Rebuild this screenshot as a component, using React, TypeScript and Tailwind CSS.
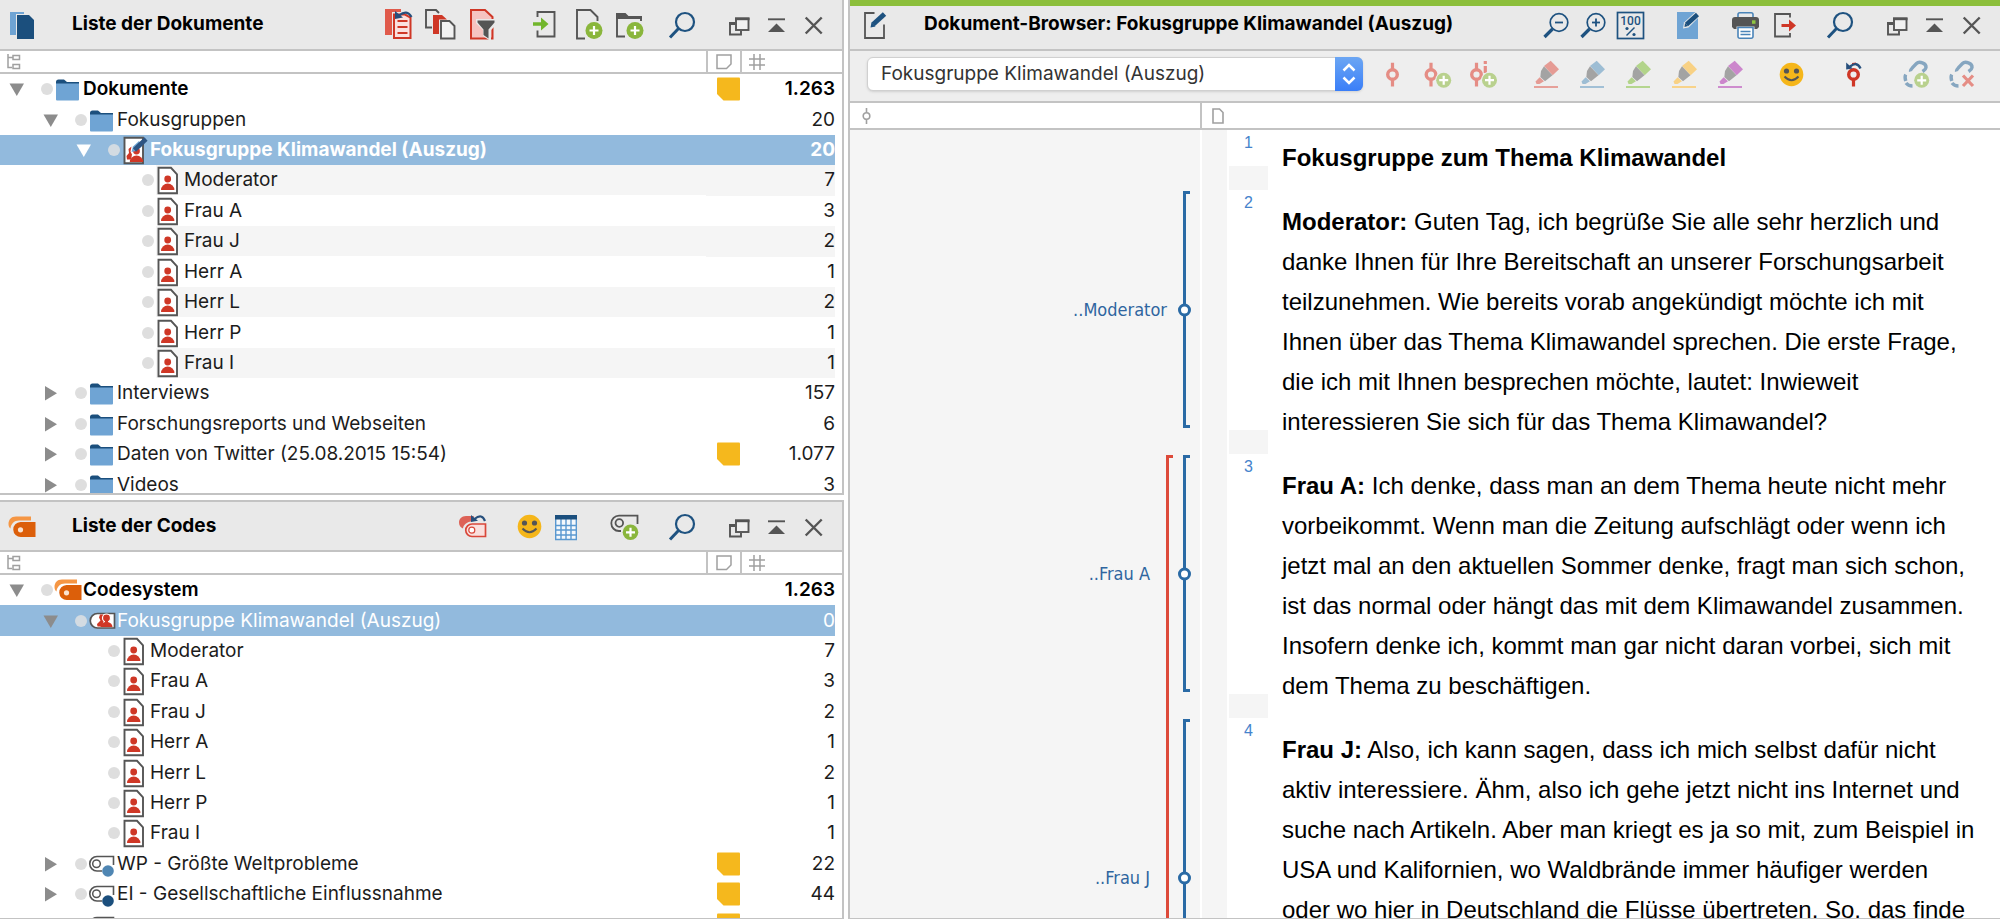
import type { ReactNode } from "react";

const GREY = "#555555";
const NAVY = "#1e5280";
const SKY = "#6fa4d4";
const RED = "#cf3726";
const GREEN = "#8ab63c";

type IconProps = { children: ReactNode };

function Glyph({ children }: IconProps) {
  return (
    <svg viewBox="0 0 32 32" width="32" height="32" fill="none" className="block shrink-0 overflow-visible" aria-hidden="true">
      {children}
    </svg>
  );
}

function IconButton({ label, children }: { label: string; children: ReactNode }) {
  return (
    <button type="button" aria-label={label} title={label} className="size-8 shrink-0">
      <Glyph>{children}</Glyph>
    </button>
  );
}

function Plus({ x, y, r = 8.5, fill = GREEN }: { x: number; y: number; r?: number; fill?: string }) {
  return (
    <>
      <circle cx={x} cy={y} r={r} fill={fill} />
      <path d={`M${x - 4.5} ${y}h9M${x} ${y - 4.5}v9`} stroke="#fff" strokeWidth="2.2" />
    </>
  );
}

/* ---------- toolbar drawings ---------- */

const docsLogo = (
  <>
    <path d="M4 4H18V6H10V27H4z" fill={SKY} />
    <path d="M11 7H23L28 12V31H11z" fill="#1b4f7d" />
  </>
);

const codesLogo = (
  <>
    <path d="M25 6.500H10C5 6.500 2.500 10 2.500 14c0 2 .8 3.500 2 4.500C5 14 8 10.500 13 10.500H25z" fill="#f59644" />
    <path d="M14.500 12H29.500V27H15A7.500 7.500 0 0 1 14.500 12z" fill="#dc5f0a" />
    <circle cx="14.500" cy="19.800" r="2.600" fill="#fbe3d0" />
  </>
);

const editDocLogo = (
  <>
    <path d="M14.500 5H5V30H24V16.500" stroke={GREY} strokeWidth="1.800" />
    <path d="M13 16.500L24.500 6" stroke={NAVY} strokeWidth="5" />
    <path d="M10.500 19.500l1-5 4 4z" fill={NAVY} />
  </>
);

const resetDocs = (
  <>
    <path d="M2 1h16v3H9v23H2z" fill="#e05a4b" />
    <path d="M11 6.500h11l5.500 3V30H11z" fill="#fae0de" stroke={RED} strokeWidth="2" />
    <path d="M14.500 13h10M14.500 19h10M14.500 25h10" stroke={RED} strokeWidth="1.800" />
    <path d="M12 3v8l8-1.500z" fill="#274f7c" />
    <path d="M16 7.500Q24 1 28.500 9" stroke="#274f7c" strokeWidth="2.200" />
  </>
);

const activateDocs = (
  <>
    <path d="M7 19.500H1V2h10l3 3" stroke={GREY} strokeWidth="1.900" />
    <path d="M8 7h9l5 4.500h-8V26H8z" fill={RED} />
    <path d="M16 13h8.500l5 5v12.500H16z" stroke={GREY} fill="#f1f1f1" strokeWidth="1.900" />
  </>
);

const filterDocs = (
  <>
    <path d="M4 2h14l7.500 7V30.500H4z" fill="#f6c4c1" stroke={RED} strokeWidth="2" />
    <path d="M9 11h22v4l-7 7v10h-2l-6-4v-6l-7-7z" fill="#e9e9e9" />
    <path d="M10.500 12.500h17v2l-6 7v9l-5-3.500v-5.500l-6-7z" fill={GREY} />
  </>
);

const importDoc = (
  <>
    <path d="M9.500 9V4h17v24.500h-17v-6" stroke={GREY} strokeWidth="1.900" />
    <path d="M5 14.200h8V9.500l7.500 6.500-7.500 6.500v-4.700H5z" fill="#72b62c" />
  </>
);

const newDoc = (
  <>
    <path d="M15 30.500H7V2h13.500l7 7v4" stroke={GREY} strokeWidth="1.900" />
    <Plus x={24} y={22.5} />
  </>
);

const newFolder = (
  <>
    <path d="M13 28.500H5V9h24v4" stroke={GREY} strokeWidth="1.900" />
    <path d="M4 5h9.500l3 3H30v3H4z" fill={GREY} />
    <Plus x={23} y={22.5} />
  </>
);

const search = (
  <>
    <circle cx="19" cy="14" r="9" stroke={NAVY} strokeWidth="2.200" />
    <path d="M12.500 20.500L4 29.500" stroke={NAVY} strokeWidth="3" />
  </>
);

const zoomOut = (
  <>
    <circle cx="19" cy="14.500" r="8.800" stroke={NAVY} strokeWidth="1.700" />
    <path d="M15 14.500h8" stroke={NAVY} strokeWidth="1.800" />
    <path d="M12.500 21L4.500 29" stroke={NAVY} strokeWidth="3.200" />
  </>
);

const zoomIn = (
  <>
    {zoomOut}
    <path d="M19 10.500v8" stroke={NAVY} strokeWidth="1.800" />
  </>
);

const zoomReset = (
  <>
    <rect x="3.500" y="4.500" width="26" height="26" stroke={NAVY} strokeWidth="1.700" />
    <text x="16.500" y="17" textAnchor="middle" fontSize="12" fontWeight="500" fill={NAVY} className="font-['Roboto',sans-serif]">100</text>
    <path d="M12.500 27.500l8-8" stroke={NAVY} strokeWidth="1.500" />
    <circle cx="13" cy="20.500" r="1.600" fill={NAVY} />
    <circle cx="20" cy="26.500" r="1.600" fill={NAVY} />
  </>
);

const editMode = (
  <>
    <path d="M5 4h21v27H5z" fill={SKY} />
    <path d="M11 20.500l1-6L24 3.500h5V7L16.500 19.500z" fill="#e9e9e9" />
    <path d="M14.500 16.500L25.500 6.500" stroke="#1b4f7d" strokeWidth="4.500" />
    <path d="M12.500 19l.5-4 3 3z" fill="#1b4f7d" />
  </>
);

const printer = (
  <>
    <path d="M8 10V6.500A1.800 1.800 0 0 1 9.800 4.700h11.400A1.800 1.800 0 0 1 23 6.500V10" stroke="#4a84b8" strokeWidth="1.600" />
    <path d="M5 9h21a3 3 0 0 1 3 3v7l-2 2H4l-2-2v-7a3 3 0 0 1 3-3z" fill={GREY} />
    <path d="M6.500 18.500h18v11h-18z" fill="#e9e9e9" />
    <path d="M8 19.500h15v9a1.800 1.800 0 0 1-1.800 1.800H9.800A1.800 1.800 0 0 1 8 28.500z" fill="#fff" stroke="#4a84b8" strokeWidth="1.600" />
    <path d="M10.500 23.500h10M10.500 26.500h10" stroke="#4a84b8" strokeWidth="1.400" />
    <path d="M22 12.300h3.500v3.500H22z" fill="#8fc640" />
  </>
);

const exportDoc = (
  <>
    <path d="M21 9.500V6H6v22.500h15V25" stroke={GREY} strokeWidth="1.800" />
    <path d="M12.500 16H20v-4.500l7 6-7 6V19h-7.500z" fill={RED} />
  </>
);

const undock = (
  <>
    <path d="M12 15H7v11.500h11V23" stroke={GREY} strokeWidth="1.900" />
    <path d="M6 14h6v3H6z" fill={GREY} />
    <rect x="13" y="10.500" width="12.500" height="11.500" fill="#f1f1f1" stroke={GREY} strokeWidth="1.900" />
    <path d="M12 9.500h14.500v2.700H12z" fill={GREY} />
  </>
);

const minimize = (
  <>
    <path d="M8 11.300h17" stroke={GREY} strokeWidth="1.900" />
    <path d="M16.500 15.500L25 24H8z" fill={GREY} />
  </>
);

const close = <path d="M8.700 9.500l16 16M24.700 9.500l-16 16" stroke={GREY} strokeWidth="2.400" />;

const resetCodes = (
  <>
    <path d="M17 6H9C4.500 6 2 9 2 12.500c0 3 1.500 5 4 6 .5-4 4-6.500 8-7z" fill="#dd6257" />
    <path d="M15 14h13.500v12.500H15a6.250 6.250 0 0 1 0-12.500z" fill="#fae0de" stroke="#d9473a" strokeWidth="1.700" />
    <circle cx="14.800" cy="20.200" r="3" fill="#fff" stroke="#d9473a" strokeWidth="1.200" />
    <path d="M14 5v7l7-1.300z" fill="#274f7c" />
    <path d="M17.500 9Q25 3 28 11" stroke="#274f7c" strokeWidth="2.200" />
  </>
);

const smiley = (
  <>
    <circle cx="15.500" cy="16.500" r="11.800" fill="#f5b61a" />
    <circle cx="10.500" cy="13" r="2.600" fill={GREY} />
    <circle cx="20.500" cy="13" r="2.600" fill={GREY} />
    <path d="M8.500 18.500Q15.500 26 22.500 18.500" stroke={GREY} strokeWidth="2" />
  </>
);

const grid = (
  <>
    <path d="M5.700 6h20.600v23.500H5.700z" fill="#f4f8fc" stroke="#5a98d0" strokeWidth="1.400" />
    <path d="M5 15.500h22M5 20h22M5 25h22M11 9v20M16 9v20M21 9v20" stroke="#5a98d0" strokeWidth="1.400" />
    <path d="M5 5h22v4.500H5z" fill="#1b4f7d" />
  </>
);

const newCode = (
  <>
    <path d="M12 21h-2a7.700 7.700 0 0 1 0-15.400h18.500V14" stroke={GREY} strokeWidth="1.800" />
    <circle cx="10.300" cy="13" r="3.800" stroke={GREY} strokeWidth="1.800" />
    <Plus x={21.5} y={22.3} r={7.8} />
  </>
);

function CodeRing({ x, color }: { x: number; color: string }) {
  return (
    <>
      <circle cx={x} cy="16.500" r="4.800" stroke={color} strokeWidth="3.400" />
      <path d={`M${x} 4.800v7M${x} 21.500v7`} stroke={color} strokeWidth="3.200" />
    </>
  );
}

const paleRed = "#e58d85";
const paleGreen = "#b9d18e";

const code = <CodeRing x={16.5} color={paleRed} />;
const codePlus = (
  <>
    <CodeRing x={9} color={paleRed} />
    <circle cx="21.700" cy="22.200" r="8.500" fill="#eee" />
    <Plus x={21.7} y={22.2} r={7.5} fill={paleGreen} />
  </>
);
const codeInVivo = (
  <>
    <CodeRing x={8.5} color={paleRed} />
    <path d="M17.300 3v3M17.300 8v7" stroke={paleRed} strokeWidth="3.200" />
    <circle cx="21.500" cy="22.200" r="8.500" fill="#eee" />
    <Plus x={21.5} y={22.2} r={7.5} fill={paleGreen} />
  </>
);
const undoCode = (
  <>
    <circle cx="15.500" cy="16.500" r="4.800" stroke={RED} strokeWidth="3.400" />
    <path d="M15.500 21.500v7" stroke={RED} strokeWidth="3.200" />
    <path d="M14 5l4-.5v2h-4z" fill={RED} />
    <path d="M8.200 4.500v7l6.500-1z" fill="#274f7c" />
    <path d="M12 8.500Q19 3 22.500 10.500" stroke="#274f7c" strokeWidth="2.400" />
  </>
);
const chain = (
  <path
    d="M10.500 13.500c-.6-2 3.500-5.500 6-8C19 3 26.500 5 26 9.500c-.2 2-2.500 3.300-3.500 4M5.700 16.500c-1.200 2-.7 4 0 6.500M6 25c1.500 2 3.500 3 6.500 3"
    stroke="#86a6c0"
    strokeWidth="3.400"
  />
);
const linkPlus = (
  <>
    {chain}
    <Plus x={21.7} y={22.3} r={7.5} fill={paleGreen} />
  </>
);
const linkRemove = (
  <>
    {chain}
    <path d="M17 17.500l10 10.500M27 17.500L17 28" stroke={paleRed} strokeWidth="3.200" />
  </>
);

function marker(color: string) {
  return (
    <>
      <path d="M20.700 2.700L29 11.300 22.700 17.300 14 8z" fill={color} />
      <path d="M14 8.200L22.500 17.300 15 23.300 10.300 19 11 13z" fill="#a3a3a3" />
      <path d="M9.700 19.300L14 23.300 9.500 26H6.500L5.500 23.500z" fill={color} />
      <path d="M4 29h24" stroke={color} strokeWidth="1.900" />
    </>
  );
}

const markers = [
  { label: "Rot markieren", color: "#e59b94" },
  { label: "Blau markieren", color: "#9dbdd4" },
  { label: "Grün markieren", color: "#b2d48a" },
  { label: "Gelb markieren", color: "#f8d184" },
  { label: "Lila markieren", color: "#cc86cc" },
];

/* ---------- column header drawings ---------- */

function TreeGlyph() {
  return (
    <svg width="14" height="16" fill="none" stroke="#a0a0a0" strokeWidth="1.500" className="ml-[7px]" aria-hidden="true">
      <path d="M1 0v13.500h4M1 3.500h5M6 1.500h6.500v4H6zM6 10.500h6.500v4H6z" />
    </svg>
  );
}

function MemoGlyph() {
  return (
    <svg width="16" height="16" fill="none" stroke="#a0a0a0" strokeWidth="1.500" className="ml-2" aria-hidden="true">
      <path d="M1 1h14v9l-4.500 4.500H1z" />
    </svg>
  );
}

function HashGlyph() {
  return (
    <svg width="16" height="16" fill="none" stroke="#a0a0a0" strokeWidth="1.500" className="ml-[7px]" aria-hidden="true">
      <path d="M5 0v16M11 0v16M0 5h16M0 11h16" />
    </svg>
  );
}

/* ---------- tree ---------- */

type Kind = "folder" | "person" | "groupDoc" | "codes" | "groupCode" | "codeLight" | "codeDark";

function Person({ x, y }: { x: number; y: number }) {
  return (
    <>
      <circle cx={x} cy={y} r="3.400" fill={RED} />
      <path d={`M${x - 6.7} ${y + 11}a6.700 6.500 0 0 1 13.400 0z`} fill={RED} />
    </>
  );
}

function NodeIcon({ kind }: { kind: Kind }) {
  const code = (dot: string) => (
    <>
      <path d="M13 22H8A7.200 7.200 0 0 1 8 7.500H24.500V16" fill="none" stroke={GREY} strokeWidth="1.600" />
      <circle cx="7.500" cy="14.700" r="3.800" fill="none" stroke={GREY} strokeWidth="1.500" />
      <circle cx="19" cy="22" r="5.800" fill={dot} />
    </>
  );
  return (
    <svg viewBox="0 0 28 30" width="28" height="30" fill="none" className="block shrink-0 overflow-visible" aria-hidden="true">
      {kind === "folder" && (
        <>
          <path d="M1 8q0-2.500 2.500-2.500h5.500L12 8h12v4H1z" fill="#1b4f7d" />
          <path d="M1 9h23v16.500q0 1-1 1H2q-1 0-1-1z" fill={SKY} />
          <path d="M1 8h23v1.500H1z" fill="#1b4f7d" />
        </>
      )}
      {kind === "person" && (
        <>
          <path d="M3 2.800h12.500l6 6.500v19H3z" fill="#fff" stroke={GREY} strokeWidth="1.900" transform="translate(-0.5 0)" />
          <Person x={11.7} y={14} />
        </>
      )}
      {kind === "groupDoc" && (
        <>
          <path d="M2.500 2.800h18.500v25.500H2.500z" fill="#fff" stroke={GREY} strokeWidth="1.900" />
          <path d="M9.500 11.500l-3 2.500.5 4-2.500 3 .5 3.500h4l1-5-1.500-3z" fill={RED} />
          <Person x={14.5} y={16} />
          <path d="M9.500 17l1.500-5.500 6-5.500 3 5-6 5z" fill={SKY} />
          <path d="M12.500 15L24 4" stroke="#2d5482" strokeWidth="4.500" />
        </>
      )}
      {kind === "codes" && <g transform="translate(-3 -2)">{codesLogo}</g>}
      {kind === "groupCode" && (
        <>
          <path d="M8.500 7.500H25.500V22H8.500A7.250 7.250 0 0 1 8.500 7.500z" fill="#fff" stroke={GREY} strokeWidth="1.700" />
          <path d="M14 8.500h-3l-1 3 1.500 3-3.500 3.500.5 2.500h4l3-7z" fill={RED} />
          <circle cx="17.500" cy="12" r="4" fill={RED} stroke="#fff" strokeWidth="1.200" />
          <path d="M11.500 21c0-2.500 2-4.500 4.500-5v-1.500h3V16c2.500.5 4.500 2.500 4.500 5z" fill={RED} />
        </>
      )}
      {kind === "codeLight" && code("#4f86b3")}
      {kind === "codeDark" && code("#1b4f7d")}
    </svg>
  );
}

type Row = {
  level: 0 | 1 | 2 | 3;
  kind: Kind;
  label: string;
  count: string;
  open?: boolean;
  bold?: boolean;
  selected?: boolean;
  whiteToggle?: boolean;
  memo?: boolean;
  shaded?: boolean;
};

const indent = ["pl-0", "pl-[34px]", "pl-[67px]", "pl-[101px]"];

const documents: Row[] = [
  { level: 0, kind: "folder", label: "Dokumente", count: "1.263", open: true, bold: true, memo: true },
  { level: 1, kind: "folder", label: "Fokusgruppen", count: "20", open: true },
  { level: 2, kind: "groupDoc", label: "Fokusgruppe Klimawandel (Auszug)", count: "20", open: true, bold: true, selected: true, whiteToggle: true },
  { level: 3, kind: "person", label: "Moderator", count: "7", shaded: true },
  { level: 3, kind: "person", label: "Frau A", count: "3" },
  { level: 3, kind: "person", label: "Frau J", count: "2", shaded: true },
  { level: 3, kind: "person", label: "Herr A", count: "1" },
  { level: 3, kind: "person", label: "Herr L", count: "2", shaded: true },
  { level: 3, kind: "person", label: "Herr P", count: "1" },
  { level: 3, kind: "person", label: "Frau I", count: "1", shaded: true },
  { level: 1, kind: "folder", label: "Interviews", count: "157", open: false },
  { level: 1, kind: "folder", label: "Forschungsreports und Webseiten", count: "6", open: false },
  { level: 1, kind: "folder", label: "Daten von Twitter (25.08.2015 15:54)", count: "1.077", open: false, memo: true },
  { level: 1, kind: "folder", label: "Videos", count: "3", open: false },
];

const codes: Row[] = [
  { level: 0, kind: "codes", label: "Codesystem", count: "1.263", open: true, bold: true },
  { level: 1, kind: "groupCode", label: "Fokusgruppe Klimawandel (Auszug)", count: "0", open: true, selected: true },
  { level: 2, kind: "person", label: "Moderator", count: "7" },
  { level: 2, kind: "person", label: "Frau A", count: "3" },
  { level: 2, kind: "person", label: "Frau J", count: "2" },
  { level: 2, kind: "person", label: "Herr A", count: "1" },
  { level: 2, kind: "person", label: "Herr L", count: "2" },
  { level: 2, kind: "person", label: "Herr P", count: "1" },
  { level: 2, kind: "person", label: "Frau I", count: "1" },
  { level: 1, kind: "codeLight", label: "WP - Größte Weltprobleme", count: "22", open: false, memo: true },
  { level: 1, kind: "codeDark", label: "EI - Gesellschaftliche Einflussnahme", count: "44", open: false, memo: true },
  { level: 1, kind: "codeDark", label: "", count: "", memo: true },
];

function TreeRow({ row }: { row: Row }) {
  const tone = row.selected ? "bg-[#92badd] text-white" : row.bold ? "text-black" : "text-[#1c1c1c]";
  const weight = row.bold ? (row.selected ? "font-bold" : "font-semibold") : "font-normal";
  const shade = row.shaded ? "bg-[#f5f5f5]" : "";
  return (
    <tr className={weight}>
      <td className={`p-0 ${tone}`}>
        <div className={`flex h-full items-center ${indent[row.level]}`}>
          {row.open === undefined ? (
            <span className="w-[34px] shrink-0" />
          ) : (
            <button type="button" aria-label={row.open ? "Zuklappen" : "Aufklappen"} className="w-[34px] shrink-0">
              <svg width="34" height="16" fill={row.whiteToggle ? "#fff" : "#8c8c8c"} className="block" aria-hidden="true">
                {row.open ? <path d="M9.500 2.500h14.500l-7.200 12.500z" /> : <path d="M11 1v14.500l12-7.300z" />}
              </svg>
            </button>
          )}
          <span className="flex w-[21px] shrink-0 justify-center pl-1">
            <span className={`size-3 rounded-full ${row.selected ? "bg-[#d3dbe2]" : "bg-[#dedede]"}`} />
          </span>
          <span className={`flex flex-1 items-center whitespace-nowrap ${shade}`}>
            <NodeIcon kind={row.kind} />
            {row.label}
          </span>
        </div>
      </td>
      <td className={`p-0 ${tone} ${shade}`}>
        {row.memo && (
          <svg width="24" height="24" className="ml-[11px] block overflow-visible" aria-hidden="true">
            <path d="M0 1.500q0-1 1-1h21q1 0 1 1v21q0 1-1 1H6.500L0 17z" fill="#f5b81d" />
          </svg>
        )}
      </td>
      <td className={`p-0 text-right ${tone} ${shade}`}>{row.count}</td>
      <td className="p-0" />
    </tr>
  );
}

function TreeTable({ rows, height }: { rows: Row[]; height: string }) {
  return (
    <div className="min-h-0 flex-1 overflow-hidden">
      <table className={`w-full table-fixed border-separate border-spacing-0 text-[19px] leading-6 ${height}`}>
        <colgroup>
          <col />
          <col className="w-[34px]" />
          <col className="w-[95px]" />
          <col className="w-[7px]" />
        </colgroup>
        <thead>
          <tr className="h-[23px]">
            <th aria-label="Name" className="border-b-2 border-[#c3c3c3] p-0"><TreeGlyph /></th>
            <th aria-label="Memo" className="border-b-2 border-l-2 border-[#c3c3c3] p-0"><MemoGlyph /></th>
            <th aria-label="Anzahl" colSpan={2} className="border-b-2 border-l-2 border-[#c3c3c3] p-0"><HashGlyph /></th>
          </tr>
        </thead>
        <tbody>
          {rows.map((row, i) => (
            <TreeRow key={i} row={row} />
          ))}
        </tbody>
      </table>
    </div>
  );
}

function WindowButtons() {
  return (
    <div className="flex gap-[5px]">
      <IconButton label="Fenster lösen">{undock}</IconButton>
      <IconButton label="Minimieren">{minimize}</IconButton>
      <IconButton label="Schließen">{close}</IconButton>
    </div>
  );
}

/* ---------- document ---------- */

const paragraphs = [
  {
    n: 2,
    code: "..Moderator",
    speaker: "Moderator:",
    text: "Guten Tag, ich begrüße Sie alle sehr herzlich und danke Ihnen für Ihre Bereitschaft an unserer Forschungsarbeit teilzunehmen. Wie bereits vorab angekündigt möchte ich mit Ihnen über das Thema Klimawandel sprechen. Die erste Frage, die ich mit Ihnen besprechen möchte, lautet: Inwieweit interessieren Sie sich für das Thema Klimawandel?",
  },
  {
    n: 3,
    code: "..Frau A",
    outer: "start",
    speaker: "Frau A:",
    text: "Ich denke, dass man an dem Thema heute nicht mehr vorbeikommt. Wenn man die Zeitung aufschlägt oder wenn ich jetzt mal an den aktuellen Sommer denke, fragt man sich schon, ist das normal oder hängt das mit dem Klimawandel zusammen. Insofern denke ich, kommt man gar nicht daran vorbei, sich mit dem Thema zu beschäftigen.",
  },
  {
    n: 4,
    code: "..Frau J",
    outer: "through",
    speaker: "Frau J:",
    text: "Also, ich kann sagen, dass ich mich selbst dafür nicht aktiv interessiere. Ähm, also ich gehe jetzt nicht ins Internet und suche nach Artikeln. Aber man kriegt es ja so mit, zum Beispiel in USA und Kalifornien, wo Waldbrände immer häufiger werden oder wo hier in Deutschland die Flüsse übertreten. So, das finde",
  },
];

function Bracket({ code, outer }: { code: string; outer?: string }) {
  return (
    <div className="flex justify-end pr-[10px] pt-px text-[#2f659f]">
      <span className="mb-[26px] flex items-center pr-4 text-lg leading-6">{code}</span>
      {outer === "start" && <span className="mr-[10px] w-[7px] border-l-[3px] border-t-[3px] border-[#dd4a3a]" />}
      {outer === "through" && <span className="-mt-px mr-[10px] w-[7px] border-l-[3px] border-[#dd4a3a]" />}
      <span className="relative mb-[26px] w-[7px] border-y-[3px] border-l-[3px] border-[#2a6aa5]">
        <span className="absolute -left-2 top-1/2 size-[13px] -translate-y-1/2 rounded-full border-[3px] border-[#2a6aa5] bg-white" />
      </span>
    </div>
  );
}

function NumberCell({ n }: { n: number }) {
  return (
    <div className="flex flex-col justify-between border-l-2 border-white pr-[14px] pt-px">
      <span className="text-center text-base leading-6 text-[#4583cc]">{n}</span>
      <span className="h-6 bg-[#f5f5f5]" />
    </div>
  );
}

const docRow = "grid grid-cols-[350px_27px_55px_1fr]";

export default function App() {
  return (
    <div className="flex h-screen overflow-hidden bg-white font-['Inter',sans-serif] text-black">
      <div className="flex w-[844px] shrink-0 flex-col gap-[5px]">
        <section className="flex h-[495px] flex-col border-b-2 border-r-2 border-[#c3c3c3]">
          <header className="flex h-[51px] shrink-0 items-center border-b-2 border-[#c3c3c3] bg-[#e9e9e9] pb-px pl-[6px] pr-[13px]">
            <Glyph>{docsLogo}</Glyph>
            <h2 className="ml-[34px] mr-auto text-[19px] leading-8 font-bold">Liste der Dokumente</h2>
            <div className="mr-[29px] flex gap-[10px]">
              <IconButton label="Aktivierung zurücksetzen">{resetDocs}</IconButton>
              <IconButton label="Dokumente aktivieren">{activateDocs}</IconButton>
              <IconButton label="Filter">{filterDocs}</IconButton>
            </div>
            <div className="mr-[22px] flex gap-[10px]">
              <IconButton label="Importieren">{importDoc}</IconButton>
              <IconButton label="Neues Dokument">{newDoc}</IconButton>
              <IconButton label="Neue Gruppe">{newFolder}</IconButton>
            </div>
            <div className="mr-[25px] flex">
              <IconButton label="Suchen">{search}</IconButton>
            </div>
            <WindowButtons />
          </header>
          <TreeTable rows={documents} height="h-[449px]" />
        </section>

        <section className="flex min-h-0 flex-1 flex-col border-b border-r-2 border-t-2 border-[#c3c3c3]">
          <header className="flex h-[50px] shrink-0 items-center border-b-2 border-[#c3c3c3] bg-[#e9e9e9] pl-[6px] pr-[13px]">
            <Glyph>{codesLogo}</Glyph>
            <h2 className="ml-[34px] mr-auto text-[19px] leading-8 font-bold">Liste der Codes</h2>
            <div className="mr-[25px] flex">
              <IconButton label="Aktivierung zurücksetzen">{resetCodes}</IconButton>
            </div>
            <div className="mr-[27px] flex gap-1">
              <IconButton label="Emoticode">{smiley}</IconButton>
              <IconButton label="Codematrix">{grid}</IconButton>
            </div>
            <div className="mr-[25px] flex gap-[25px]">
              <IconButton label="Neuer Code">{newCode}</IconButton>
              <IconButton label="Suchen">{search}</IconButton>
            </div>
            <WindowButtons />
          </header>
          <TreeTable rows={codes} height="h-[388px]" />
        </section>
      </div>

      <main className="ml-1 flex min-w-0 flex-1 flex-col border-b border-l-2 border-[#c3c3c3]">
        <header className="flex h-[51px] shrink-0 items-center border-b-2 border-b-[#c3c3c3] border-t-[6px] border-t-[#8cbf3c] bg-[#e9e9e9] pb-[9px] pl-[10px] pr-[13px] pt-0.5">
          <Glyph>{editDocLogo}</Glyph>
          <h1 className="ml-8 mr-auto whitespace-nowrap text-[19px] leading-8 font-bold">Dokument-Browser: Fokusgruppe Klimawandel (Auszug)</h1>
          <div className="mr-[26px] flex gap-[5px]">
            <IconButton label="Verkleinern">{zoomOut}</IconButton>
            <IconButton label="Vergrößern">{zoomIn}</IconButton>
            <IconButton label="Originalgröße">{zoomReset}</IconButton>
          </div>
          <div className="mr-[26px] flex">
            <IconButton label="Bearbeiten">{editMode}</IconButton>
          </div>
          <div className="mr-[23px] flex gap-[7px]">
            <IconButton label="Drucken">{printer}</IconButton>
            <IconButton label="Exportieren">{exportDoc}</IconButton>
          </div>
          <div className="mr-[25px] flex">
            <IconButton label="Suchen">{search}</IconButton>
          </div>
          <WindowButtons />
        </header>

        <div className="flex h-[52px] shrink-0 items-center gap-[30px] border-b-2 border-[#c3c3c3] bg-[#eeeeee] pb-1 pl-[17px] pr-[22px]">
          <div className="relative -mr-[17px] flex-1">
            <select
              aria-label="Dokument"
              className="block h-[34px] w-full appearance-none rounded-md border border-[#d0d0d0] bg-white pl-[13px] text-[19px] leading-6 text-[#333] shadow-sm"
            >
              <option>Fokusgruppe Klimawandel (Auszug)</option>
            </select>
            <span className="pointer-events-none absolute inset-y-0 right-0 w-7 rounded-r-md bg-linear-to-b from-[#6ca6f3] to-[#3a7ef8]">
              <svg width="28" height="34" fill="none" stroke="#fff" strokeWidth="2.500" aria-hidden="true">
                <path d="M8.500 13.500l5.500-5.500 5.500 5.500M8.500 20.500l5.500 5.500 5.500-5.500" />
              </svg>
            </span>
          </div>
          <div className="flex gap-[14px]">
            <IconButton label="Codieren">{code}</IconButton>
            <IconButton label="Mit neuem Code codieren">{codePlus}</IconButton>
            <IconButton label="In-vivo-Codieren">{codeInVivo}</IconButton>
          </div>
          <div className="flex gap-[14px]">
            {markers.map((m) => (
              <IconButton key={m.label} label={m.label}>{marker(m.color)}</IconButton>
            ))}
          </div>
          <IconButton label="Emoticode">{smiley}</IconButton>
          <IconButton label="Codierung rückgängig">{undoCode}</IconButton>
          <div className="flex gap-[14px]">
            <IconButton label="Link einfügen">{linkPlus}</IconButton>
            <IconButton label="Link entfernen">{linkRemove}</IconButton>
          </div>
        </div>

        <div className="flex h-[27px] shrink-0 items-stretch border-b-2 border-[#c3c3c3]">
          <div className="flex w-[350px] items-center pl-3">
            <svg width="9" height="16" fill="none" stroke="#a0a0a0" strokeWidth="1.600" aria-hidden="true">
              <circle cx="4.500" cy="8" r="3.300" />
              <path d="M4.500 0v4.500M4.500 11.500V16" />
            </svg>
          </div>
          <div className="flex flex-1 items-center border-l-2 border-[#c3c3c3] pl-[10px]">
            <svg width="12" height="16" fill="none" stroke="#a0a0a0" strokeWidth="1.600" aria-hidden="true">
              <path d="M1 1h6.500L11 4.500V15H1z" />
            </svg>
          </div>
        </div>

        <article className="min-h-0 flex-1 overflow-hidden font-['Liberation_Sans',Arial,sans-serif] text-2xl leading-10">
          <div className={docRow}>
            <div className="bg-[#f5f5f5]" />
            <div className="border-l-2 border-white bg-[#f5f5f5]" />
            <NumberCell n={1} />
            <h3 className="pb-3 pt-2 font-bold">Fokusgruppe zum Thema Klimawandel</h3>
          </div>
          {paragraphs.map((p) => (
            <div key={p.n} className={`${docRow} ${p.n === 4 ? "min-h-[344px]" : ""}`}>
              <div className="grid bg-[#f5f5f5] font-['DejaVu_Sans_Condensed','DejaVu_Sans',sans-serif]">
                <Bracket code={p.code} outer={p.outer} />
              </div>
              <div className="border-l-2 border-white bg-[#f5f5f5]" />
              <NumberCell n={p.n} />
              <p className="py-3 pr-5">
                <b>{p.speaker}</b> {p.text}
              </p>
            </div>
          ))}
        </article>
      </main>
    </div>
  );
}
